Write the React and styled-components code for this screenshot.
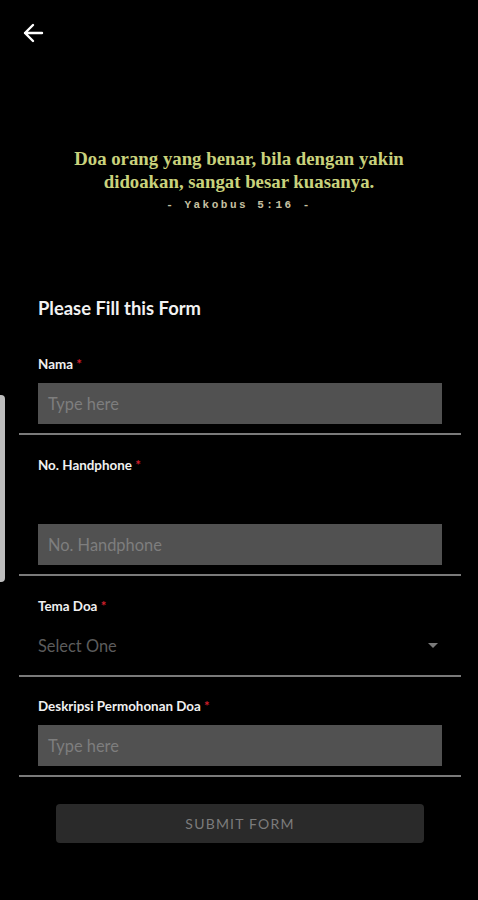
import styled, { createGlobalStyle } from "styled-components";

const GlobalStyle = createGlobalStyle`
  html, body {
    margin: 0;
    padding: 0;
    background: #000;
  }
  * {
    box-sizing: border-box;
  }
`;

const fields = [
  { label: "Nama", kind: "input", placeholder: "Type here" },
  { label: "No. Handphone", kind: "input", placeholder: "No. Handphone", spaced: true },
  { label: "Tema Doa", kind: "select", placeholder: "Select One" },
  { label: "Deskripsi Permohonan Doa", kind: "input", placeholder: "Type here" },
];

const BackArrow = () => (
  <svg width="22" height="22" viewBox="0 0 22 22" fill="none">
    <path
      d="M20 11H3M11 3L3 11l8 8"
      stroke="#fff"
      strokeWidth="2.4"
      strokeLinecap="round"
      strokeLinejoin="round"
    />
  </svg>
);

const App = () => {
  return (
    <>
      <GlobalStyle />
      <Page>
        <SideHandle />
        <Header>
          <BackButton>
            <BackArrow />
          </BackButton>
        </Header>

        <Quote>
          <QuoteText>
            Doa orang yang benar, bila dengan yakin
            <br />
            didoakan, sangat besar kuasanya.
          </QuoteText>
          <QuoteSource>- Yakobus 5:16 -</QuoteSource>
        </Quote>

        <FormTitle>Please Fill this Form</FormTitle>

        <Form>
          {fields.map((f) => (
            <Field key={f.label}>
              <Label>
                {f.label} <Required>*</Required>
              </Label>
              {f.kind === "select" ? (
                <SelectRow>
                  <SelectText>{f.placeholder}</SelectText>
                  <Caret />
                </SelectRow>
              ) : (
                <TextBox $spaced={f.spaced}>{f.placeholder}</TextBox>
              )}
            </Field>
          ))}
          <SubmitButton>SUBMIT FORM</SubmitButton>
        </Form>
      </Page>
    </>
  );
};

const Page = styled.div`
  position: relative;
  width: 478px;
  min-height: 900px;
  background: #000;
  font-family: Lato, "Open Sans", sans-serif;
  overflow: hidden;
`;

const SideHandle = styled.div`
  position: absolute;
  left: 0;
  top: 395px;
  width: 5px;
  height: 187px;
  background: #bdbdbd;
  border-radius: 0 4px 4px 0;
`;

const Header = styled.div`
  height: 66px;
  display: flex;
  align-items: center;
  padding-left: 22px;
`;

const BackButton = styled.div`
  width: 22px;
  height: 22px;
  display: flex;
`;

const Quote = styled.div`
  margin-top: 81px;
  display: flex;
  flex-direction: column;
  align-items: center;
  text-align: center;
`;

const QuoteText = styled.div`
  font-family: "Liberation Serif", serif;
  font-weight: bold;
  font-size: 18.8px;
  line-height: 23px;
  color: #c9d27c;
`;

const QuoteSource = styled.div`
  margin-top: 3px;
  font-family: "Liberation Mono", monospace;
  font-weight: bold;
  font-size: 11px;
  line-height: 18px;
  letter-spacing: 2.5px;
  color: #c6c0a2;
`;

const FormTitle = styled.div`
  margin-top: 83px;
  padding-left: 38px;
  font-weight: bold;
  font-size: 18.4px;
  line-height: 22px;
  color: #f2f2f2;
`;

const Form = styled.div`
  margin-top: 15px;
  padding: 0 17px 0 19px;
  display: flex;
  flex-direction: column;
`;

const Field = styled.div`
  padding: 22px 19px 9px;
  border-bottom: 2px solid #7a7a7a;
  display: flex;
  flex-direction: column;

  &:nth-of-type(4) {
    padding-top: 21px;
  }
`;

const Label = styled.div`
  font-weight: bold;
  font-size: 13.4px;
  line-height: 16px;
  color: #f0f0f0;
`;

const Required = styled.span`
  color: #d21f2b;
`;

const TextBox = styled.div`
  margin-top: ${(p) => (p.$spaced ? "51px" : "11px")};
  height: 41px;
  background: #515151;
  padding-left: 10px;
  display: flex;
  align-items: center;
  font-size: 16.4px;
  color: #7e7e7e;
`;

const SelectRow = styled.div`
  margin-top: 11px;
  height: 41px;
  display: flex;
  align-items: center;
  justify-content: space-between;
  padding-right: 4px;
`;

const SelectText = styled.span`
  font-size: 16.4px;
  color: #5c5c5c;
`;

const Caret = styled.span`
  width: 0;
  height: 0;
  border-left: 5px solid transparent;
  border-right: 5px solid transparent;
  border-top: 5px solid #7a7a7a;
`;

const SubmitButton = styled.div`
  margin: 27px 37px 0;
  height: 39px;
  border-radius: 4px;
  background: #2a2a2a;
  display: flex;
  align-items: center;
  justify-content: center;
  font-size: 14px;
  letter-spacing: 1.2px;
  color: #7c7c7c;
`;

export default App;
